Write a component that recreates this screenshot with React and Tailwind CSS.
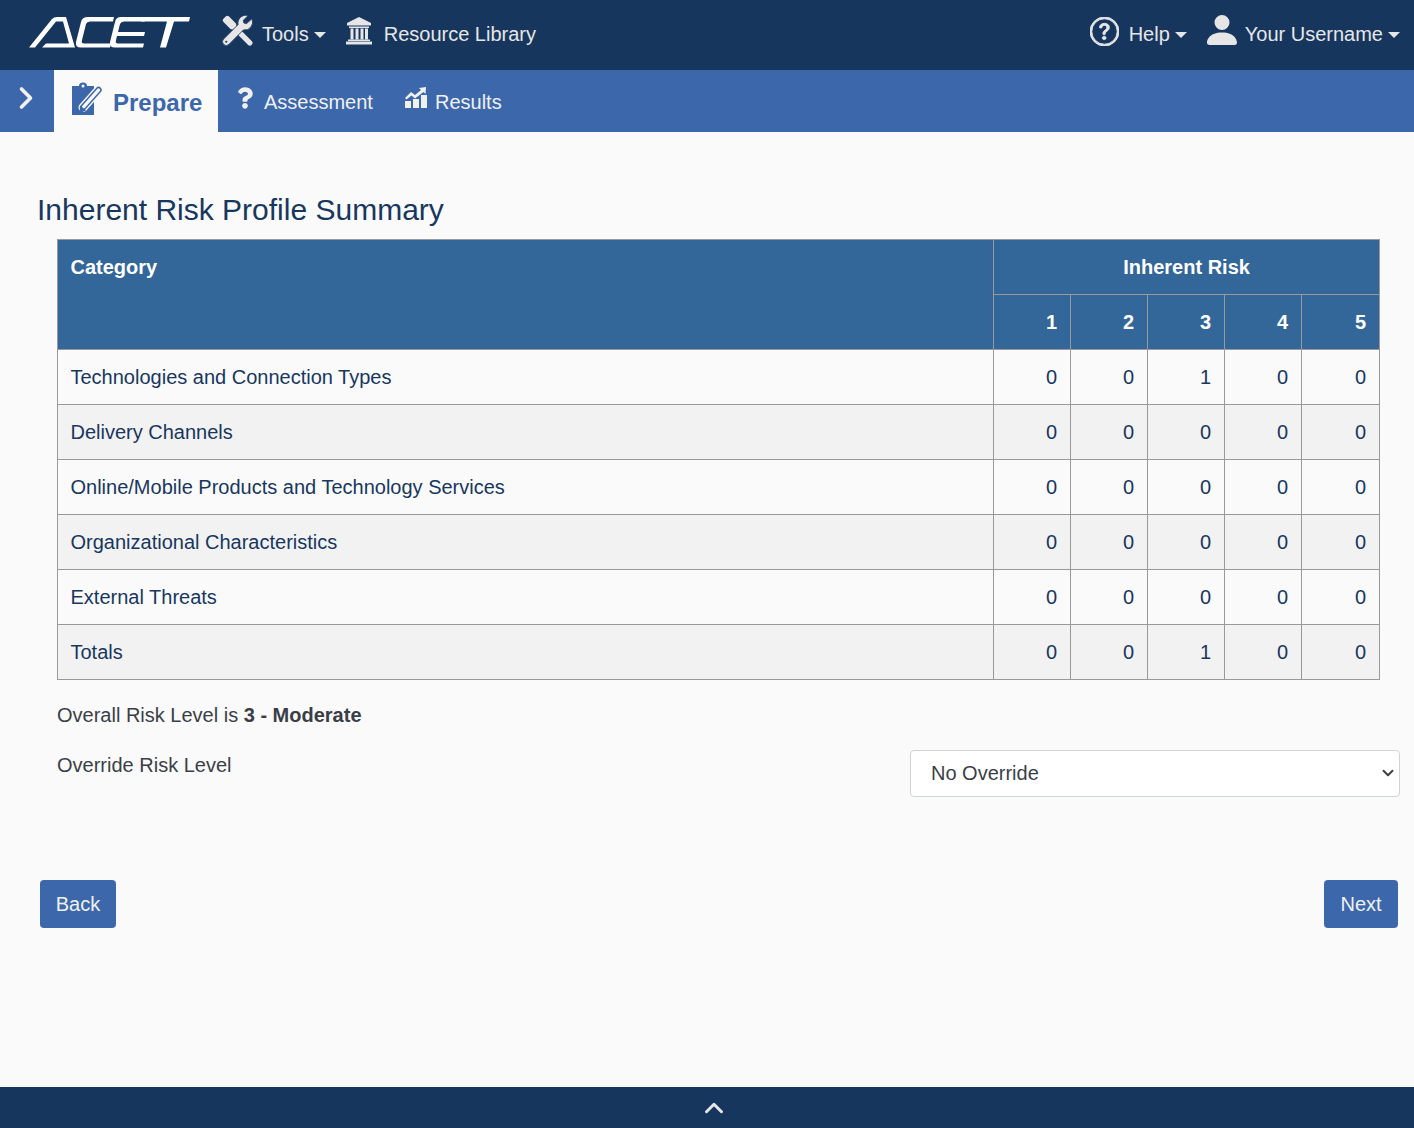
import { FaQuestion } from 'react-icons/fa';
import { BsQuestionCircle, BsPersonFill } from 'react-icons/bs';
import { ChevronRight, ChevronUp, ChevronDown } from 'lucide-react';

const rows = [
  { name: 'Technologies and Connection Types', values: [0, 0, 1, 0, 0] },
  { name: 'Delivery Channels', values: [0, 0, 0, 0, 0] },
  { name: 'Online/Mobile Products and Technology Services', values: [0, 0, 0, 0, 0] },
  { name: 'Organizational Characteristics', values: [0, 0, 0, 0, 0] },
  { name: 'External Threats', values: [0, 0, 0, 0, 0] },
  { name: 'Totals', values: [0, 0, 1, 0, 0] },
];

function Logo() {
  return (
    <svg width="164" height="34" viewBox="28 18 164 34" className="block shrink-0" fill="#fff">
      <path d="M29 49.5 L52 21 Q54 19 57 19 L66 19 L75 49.5 L42 49.5 L46 45.5 L69 45.5 L63 23.5 L56 23.5 L35 49.5 Z" />
      <path d="M114 19 L88 19 Q82 19 81 24 L76 44 Q75 49.5 81 49.5 L110 49.5 L111 45.5 L84 45.5 Q81 45.5 82 42 L86 26 Q87 23.5 90 23.5 L113 23.5 Z" />
      <path d="M146 19 L121 19 Q116 19 115 24 L110 44 Q109 49.5 115 49.5 L143 49.5 L144 45.5 L118 45.5 Q115 45.5 116 42 L117 38 L144 38 L145 34 L118 34 L120 26 Q121 23.5 124 23.5 L145 23.5 Z" />
      <path d="M142 19 L190 19 L189 23.5 L174 23.5 L166 49.5 L160 49.5 L167 23.5 L141 23.5 Z" />
    </svg>
  );
}

function ToolsIcon() {
  return (
    <svg width="31" height="31" viewBox="0 0 29 29" className="block">
      <path d="M9 9 L26 26" stroke="#e6e6e6" strokeWidth="5" strokeLinecap="round" />
      <path d="M3 5 L5 3 L11 9 L9 11 Z" fill="#e6e6e6" stroke="#e6e6e6" strokeWidth="4.5" strokeLinejoin="round" />
      <path
        d="M28 3.5 L23 8 L20.5 7.5 L20 5 L24.5 0.5 A7.5 7.5 0 0 0 15 9 L1.5 22.5 A3.5 3.5 0 0 0 6.5 27.5 L20 14 A7.5 7.5 0 0 0 28 3.5 Z"
        fill="#e6e6e6"
        stroke="#17365e"
        strokeWidth="0.8"
      />
      <circle cx="4" cy="25" r="1" fill="#17365e" />
    </svg>
  );
}

function BankIcon() {
  return (
    <svg width="28" height="28" viewBox="0 0 28 28" className="block" fill="#e6e6e6">
      <path d="M14 0 L26 6 L26 8.5 L2 8.5 L2 6 Z" />
      <rect x="4" y="9.5" width="20" height="1.5" />
      <rect x="5.5" y="11.5" width="3" height="11" />
      <rect x="10.5" y="11.5" width="3" height="11" />
      <rect x="15.5" y="11.5" width="3" height="11" />
      <rect x="20" y="11.5" width="3" height="11" />
      <rect x="3" y="22.5" width="22" height="1.5" />
      <rect x="1" y="24.5" width="26" height="3" />
    </svg>
  );
}

function ClipboardIcon() {
  return (
    <svg width="32" height="34" viewBox="0 0 32 34" className="block">
      <path d="M1 4 H8 Q8 0.5 12 0.5 Q16 0.5 16 4 H23 V33 H1 Z" fill="#3c68ab" />
      <circle cx="12" cy="4" r="1.5" fill="#fafafa" />
      <path d="M12 25.5 L27.5 8" stroke="#fafafa" strokeWidth="9" strokeLinecap="round" />
      <path d="M12 25.5 L27.5 8" stroke="#3c68ab" strokeWidth="6.4" strokeLinecap="round" />
      <path d="M12.5 25 L27.5 8" stroke="#fafafa" strokeWidth="3.4" strokeLinecap="round" />
      <path d="M8 31.5 L9.5 23.5 L15 28.5 Z" fill="#3c68ab" />
    </svg>
  );
}

function ResultsIcon() {
  return (
    <svg width="24" height="22" viewBox="0 0 24 22" className="block" fill="#f0f0f0">
      <rect x="1" y="14" width="6" height="7" />
      <rect x="9" y="12" width="6" height="9" />
      <rect x="17" y="8" width="6" height="13" />
      <path d="M1 11 L7 5 L11 8 L17 3 L15 1 L22 0 L21.5 7 L19.5 5 L11 11.5 L7.5 8.5 L2.5 12.5 Z" />
    </svg>
  );
}

function Caret() {
  return <span className="ml-[5px] mt-[1px] inline-block border-x-[6px] border-t-[6px] border-x-transparent border-t-[#e6e6e6]" />;
}

export default function App() {
  return (
    <div className="min-h-[1128px] flex flex-col bg-[#fafafa] text-[20px] font-['Liberation_Sans',Arial,sans-serif] text-[#18375f]">
      <header className="h-[70px] bg-[#17365e] flex items-center pb-[2px] text-[#e6e6e6]">
        <div className="ml-[28px] mt-[-2px]"><Logo /></div>
        <div className="ml-[30px] flex items-center">
          <div className="mt-[-7px]"><ToolsIcon /></div>
          <span className="ml-[9px]">Tools</span>
          <Caret />
        </div>
        <div className="ml-[19px] flex items-center">
          <div className="mt-[-6px]"><BankIcon /></div>
          <span className="ml-[11px]">Resource Library</span>
        </div>
        <div className="ml-auto mr-[14px] flex items-center">
          <BsQuestionCircle size={29} className="mt-[-6px] stroke-[0.5]" />
          <span className="ml-[10px]">Help</span>
          <Caret />
          <BsPersonFill size={40} className="ml-[15px] mt-[-8px]" />
          <span className="ml-[3px]">Your Username</span>
          <Caret />
        </div>
      </header>

      <nav className="h-[62px] bg-[#3c68ab] flex items-stretch text-[#f0f0f0]">
        <div className="w-[54px] flex items-start">
          <ChevronRight size={36} strokeWidth={2.4} className="ml-[8px] mt-[10px]" />
        </div>
        <div className="w-[164px] bg-[#fafafa] flex items-center pl-[17px] pt-[4px] text-[#3c68ab]">
          <div className="mt-[-9px]"><ClipboardIcon /></div>
          <span className="ml-[10px] text-[24px] font-bold">Prepare</span>
        </div>
        <div className="flex items-center pt-[2px] ml-[19px]">
          <FaQuestion size={16} className="mt-[-8px] h-[24px]" />
          <span className="ml-[11px]">Assessment</span>
        </div>
        <div className="flex items-center pt-[2px] ml-[31px]">
          <div className="mt-[-8px]"><ResultsIcon /></div>
          <span className="ml-[7px]">Results</span>
        </div>
      </nav>

      <main className="flex-1 pt-[60px]">
        <h1 className="ml-[37px] text-[30px] leading-[36px] font-normal">Inherent Risk Profile Summary</h1>
        <table className="ml-[57px] mt-[11px] w-[1322px] table-fixed border-collapse">
          <colgroup>
            <col className="w-[936px]" />
            <col className="w-[77px]" />
            <col className="w-[77px]" />
            <col className="w-[77px]" />
            <col className="w-[77px]" />
            <col className="w-[78px]" />
          </colgroup>
          <thead className="bg-[#336699] text-white font-bold">
            <tr className="h-[55px]">
              <th rowSpan={2} className="border border-[#999] pl-[12.5px] pr-[13px] pt-[12px] text-left align-top font-bold">Category</th>
              <th colSpan={5} className="border border-[#999] text-center font-bold">Inherent Risk</th>
            </tr>
            <tr className="h-[55px]">
              {[1, 2, 3, 4, 5].map((n) => (
                <th key={n} className="border border-[#999] px-[13px] text-right font-bold">{n}</th>
              ))}
            </tr>
          </thead>
          <tbody>
            {rows.map((row, i) => (
              <tr key={row.name} className={i % 2 === 0 ? 'h-[55px] bg-[#fafafa]' : 'h-[55px] bg-[#f2f2f2]'}>
                <td className="border border-[#999] pl-[12.5px] pr-[13px]">{row.name}</td>
                {row.values.map((v, j) => (
                  <td key={j} className="border border-[#999] px-[13px] text-right">{v}</td>
                ))}
              </tr>
            ))}
          </tbody>
        </table>

        <p className="ml-[57px] mt-[24px] leading-[23px] text-[#3a3f47]">
          Overall Risk Level is <b>3 - Moderate</b>
        </p>

        <div className="mt-[23px] flex items-start justify-between pl-[57px] pr-[14px]">
          <label className="mt-[4px] leading-[23px] text-[#3a3f47]">Override Risk Level</label>
          <div className="relative">
            <select className="block h-[47px] w-[490px] appearance-none rounded-[4px] border border-[#ced4da] bg-white pb-[2px] pl-[20px] pr-[24px] text-[#3a3f47]">
              <option>No Override</option>
            </select>
            <ChevronDown size={18} strokeWidth={2.6} className="pointer-events-none absolute right-[3px] top-[14px] text-[#3a3f47]" />
          </div>
        </div>

        <div className="mt-[83px] flex justify-between pl-[40px] pr-[16px]">
          <button className="h-[48px] w-[76px] rounded-[4px] bg-[#3c68ab] text-[#f0f0f0]">Back</button>
          <button className="h-[48px] w-[74px] rounded-[4px] bg-[#3c68ab] text-[#f0f0f0]">Next</button>
        </div>
      </main>

      <footer className="h-[41px] bg-[#17365e] flex items-center justify-center pl-[14px] text-[#e6e6e6]">
        <ChevronUp size={30} strokeWidth={2.4} />
      </footer>
    </div>
  );
}
